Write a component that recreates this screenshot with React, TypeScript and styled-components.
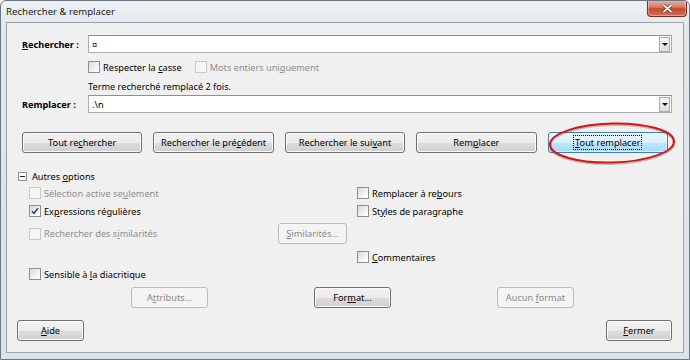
import React from "react";
import styled, { createGlobalStyle } from "styled-components";

const GlobalStyle = createGlobalStyle`
  html, body {
    margin: 0;
    padding: 0;
    background: #ffffff;
  }
  body {
    font-family: "Noto Sans", "Open Sans", sans-serif;
    font-size: 9.2px;
    color: #000;
  }
`;

const Window = styled.div`
  position: relative;
  box-sizing: border-box;
  width: 690px;
  height: 360px;
  display: flex;
  flex-direction: column;
  padding: 0 5px 6px 5px;
  border: 1px solid #6b7785;
  border-radius: 6px 6px 0 0;
  background: linear-gradient(#eef1f4, #e2e7ec 30px, #dce2e8);
  overflow: hidden;
`;

const TitleBar = styled.div`
  height: 21px;
  display: flex;
  align-items: flex-start;
`;

const Title = styled.span`
  padding-top: 4px;
  font-size: 9.6px;
  color: #1a1a1a;
`;

const CloseButton = styled.div`
  box-sizing: border-box;
  margin-left: auto;
  margin-right: -3px;
  margin-top: -1px;
  width: 40px;
  height: 17px;
  border: 1px solid #7c2c22;
  border-top: none;
  border-radius: 0 0 4px 4px;
  background: linear-gradient(#eab3a6, #d77a66 45%, #c4472f 55%, #d5705a);
  box-shadow: inset 0 0 0 1px rgba(255, 255, 255, 0.35);
  display: flex;
  align-items: center;
  justify-content: center;
`;

const Panel = styled.div`
  flex: 1;
  display: flex;
  flex-direction: column;
  border: 1px solid #9ca5ae;
  background: #f0f0f0;
  padding: 12px 11px 0 15px;
`;

const FieldRow = styled.div<{ $top: number }>`
  display: grid;
  grid-template-columns: 66px 1fr;
  align-items: center;
  margin-top: ${(p) => p.$top}px;
`;

const FieldLabel = styled.label`
  font-weight: 700;
`;

const Combo = styled.div`
  box-sizing: border-box;
  height: 18px;
  display: flex;
  align-items: center;
  padding-left: 3px;
  border: 1px solid #abadb3;
  border-top-color: #8f9092;
  background: #fff;
`;

const ComboValue = styled.span`
  flex: 1;
`;

const DropButton = styled.span`
  box-sizing: border-box;
  width: 11px;
  height: 15px;
  margin-right: 1px;
  border: 1px solid #a9a9a9;
  background: linear-gradient(#f6f6f6, #dedede);
  display: flex;
  align-items: center;
  justify-content: center;

  &::after {
    content: "";
    border-left: 3px solid transparent;
    border-right: 3px solid transparent;
    border-top: 3px solid #111;
  }
`;

const Line = styled.div<{ $top: number }>`
  display: flex;
  align-items: center;
  gap: 13px;
  height: 14px;
  margin: ${(p) => p.$top}px 0 0 66px;
  white-space: nowrap;
`;

const CheckItem = styled.label`
  display: inline-flex;
  align-items: center;
  gap: 3px;
  height: 14px;
  white-space: nowrap;
`;

const Box = styled.span<{ $disabled?: boolean }>`
  box-sizing: border-box;
  width: 12px;
  height: 12px;
  border: 1px solid ${(p) => (p.$disabled ? "#c9c9c9" : "#8e8f8f")};
  background: ${(p) =>
    p.$disabled ? "#f6f6f6" : "linear-gradient(135deg, #d9d9d9, #f7f7f7 70%, #ffffff)"};
  display: flex;
  align-items: center;
  justify-content: center;
`;

const CheckText = styled.span<{ $disabled?: boolean }>`
  color: ${(p) => (p.$disabled ? "#8f8f8f" : "#000")};
`;

const ButtonRow = styled.div`
  display: grid;
  grid-template-columns: repeat(5, 1fr);
  column-gap: 11px;
  margin: 19px 4px 0 0;
`;

const Button = styled.button<{ $hot?: boolean; $width?: number }>`
  box-sizing: border-box;
  height: 21px;
  ${(p) => (p.$width ? `width: ${p.$width}px;` : "")}
  padding: 0 4px;
  font: inherit;
  color: #000;
  border: 1px solid ${(p) => (p.$hot ? "#3c7fb1" : "#707070")};
  border-radius: 3px;
  background: ${(p) =>
    p.$hot
      ? "linear-gradient(#eaf6fd, #d9f0fc 50%, #bee6fd 51%, #a7d9f5)"
      : "linear-gradient(#f2f2f2, #ebebeb 50%, #dddddd 51%, #cfcfcf)"};
  box-shadow: inset 0 0 0 1px ${(p) => (p.$hot ? "rgba(255,255,255,0.6)" : "#fbfbfb")};
  white-space: nowrap;

  &:disabled {
    color: #8a8a8a;
    border-color: #b9bdc0;
    background: #f4f4f4;
    box-shadow: none;
  }
`;

const Focus = styled.span`
  outline: 1px dotted #000;
  outline-offset: 0;
  padding: 0 1px;
`;

const Section = styled.div`
  display: flex;
  align-items: center;
  gap: 5px;
  height: 14px;
  margin: 16px 0 0 -4px;
`;

const Expander = styled.span`
  box-sizing: border-box;
  width: 9px;
  height: 9px;
  border: 1px solid #919191;
  background: #fff;
  display: flex;
  align-items: center;
  justify-content: center;

  &::after {
    content: "";
    width: 5px;
    height: 1px;
    background: #222;
  }
`;

const Options = styled.div`
  display: grid;
  grid-template-columns: 328px 1fr;
  grid-template-rows: 18px 19px 27px 17px 14px;
  align-items: start;
  margin: 3px 0 0 7px;
`;

const OptionCell = styled.div`
  display: flex;
  align-items: center;
  height: 21px;
`;

const SideButton = styled(Button)`
  margin-left: auto;
  margin-right: 10px;
`;

const FormatRow = styled.div`
  display: flex;
  gap: 106px;
  margin-top: 6px;
  padding-left: 109px;
`;

const Footer = styled.div`
  display: flex;
  justify-content: space-between;
  margin: 12px 0 0 -5px;
`;

const Highlight = styled.svg`
  position: absolute;
  left: 545px;
  top: 119px;
  pointer-events: none;
`;

const Check = ({
  label,
  disabled,
  checked,
}: {
  label: React.ReactNode;
  disabled?: boolean;
  checked?: boolean;
}) => (
  <CheckItem>
    <Box $disabled={disabled}>
      {checked && (
        <svg width="8" height="8" viewBox="0 0 8 8">
          <path d="M1 4.2 L3 6.3 L7 1.2" fill="none" stroke="#2b3f78" strokeWidth="1.5" />
        </svg>
      )}
    </Box>
    <CheckText $disabled={disabled}>{label}</CheckText>
  </CheckItem>
);

export default function App() {
  return (
    <>
      <GlobalStyle />
      <Window>
        <TitleBar>
          <Title>Rechercher &amp; remplacer</Title>
          <CloseButton>
            <svg width="11" height="9" viewBox="0 0 11 9">
              <path d="M1.5 1 L9.5 8 M9.5 1 L1.5 8" stroke="#5a1a12" strokeWidth="3" />
              <path d="M1.5 1 L9.5 8 M9.5 1 L1.5 8" stroke="#ffffff" strokeWidth="1.8" />
            </svg>
          </CloseButton>
        </TitleBar>
        <Panel>
          <FieldRow $top={0}>
            <FieldLabel>
              <u>R</u>echercher :
            </FieldLabel>
            <Combo>
              <ComboValue>¤</ComboValue>
              <DropButton />
            </Combo>
          </FieldRow>
          <Line $top={7}>
            <Check
              label={
                <>
                  Respecter la <u>c</u>asse
                </>
              }
            />
            <Check
              disabled
              label={
                <>
                  Mots entiers uni<u>q</u>uement
                </>
              }
            />
          </Line>
          <Line $top={5}>Terme recherché remplacé 2 fois.</Line>
          <FieldRow $top={2}>
            <FieldLabel>Remplacer :</FieldLabel>
            <Combo>
              <ComboValue>.\n</ComboValue>
              <DropButton />
            </Combo>
          </FieldRow>

          <ButtonRow>
            <Button>
              Tout re<u>c</u>hercher
            </Button>
            <Button>
              Rechercher le pré<u>c</u>édent
            </Button>
            <Button>
              Rechercher le sui<u>v</u>ant
            </Button>
            <Button>
              Rem<u>p</u>lacer
            </Button>
            <Button $hot>
              <Focus>
                <u>T</u>out remplacer
              </Focus>
            </Button>
          </ButtonRow>

          <Section>
            <Expander />
            <span>
              Autres <u>o</u>ptions
            </span>
          </Section>

          <Options>
            <Check
              disabled
              label={
                <>
                  Sélection active se<u>u</u>lement
                </>
              }
            />
            <Check
              label={
                <>
                  Remplacer à re<u>b</u>ours
                </>
              }
            />
            <Check
              checked
              label={
                <>
                  Ex<u>p</u>ressions régulières
                </>
              }
            />
            <Check
              label={
                <>
                  St<u>y</u>les de paragraphe
                </>
              }
            />
            <OptionCell>
              <Check
                disabled
                label={
                  <>
                    Rechercher des s<u>i</u>milarités
                  </>
                }
              />
              <SideButton disabled $width={69}>
                <u>S</u>imilarités...
              </SideButton>
            </OptionCell>
            <span />
            <span />
            <Check
              label={
                <>
                  <u>C</u>ommentaires
                </>
              }
            />
            <Check
              label={
                <>
                  Sensible à <u>l</u>a diacritique
                </>
              }
            />
            <span />
          </Options>

          <FormatRow>
            <Button disabled $width={77}>
              A<u>t</u>tributs...
            </Button>
            <Button $width={77}>
              For<u>m</u>at...
            </Button>
            <Button disabled $width={77}>
              Aucun <u>f</u>ormat
            </Button>
          </FormatRow>

          <Footer>
            <Button $width={67}>
              <u>A</u>ide
            </Button>
            <Button $width={66}>
              <u>F</u>ermer
            </Button>
          </Footer>
        </Panel>

        <Highlight width="132" height="46" viewBox="0 0 132 46">
          <ellipse
            cx="66"
            cy="24"
            rx="62"
            ry="19.5"
            fill="none"
            stroke="rgba(90,20,20,0.25)"
            strokeWidth="3"
            transform="rotate(-1.5 66 24)"
          />
          <ellipse
            cx="66"
            cy="23"
            rx="62"
            ry="19.5"
            fill="none"
            stroke="#d01818"
            strokeWidth="2"
            transform="rotate(-1.5 66 23)"
          />
        </Highlight>
      </Window>
    </>
  );
}
